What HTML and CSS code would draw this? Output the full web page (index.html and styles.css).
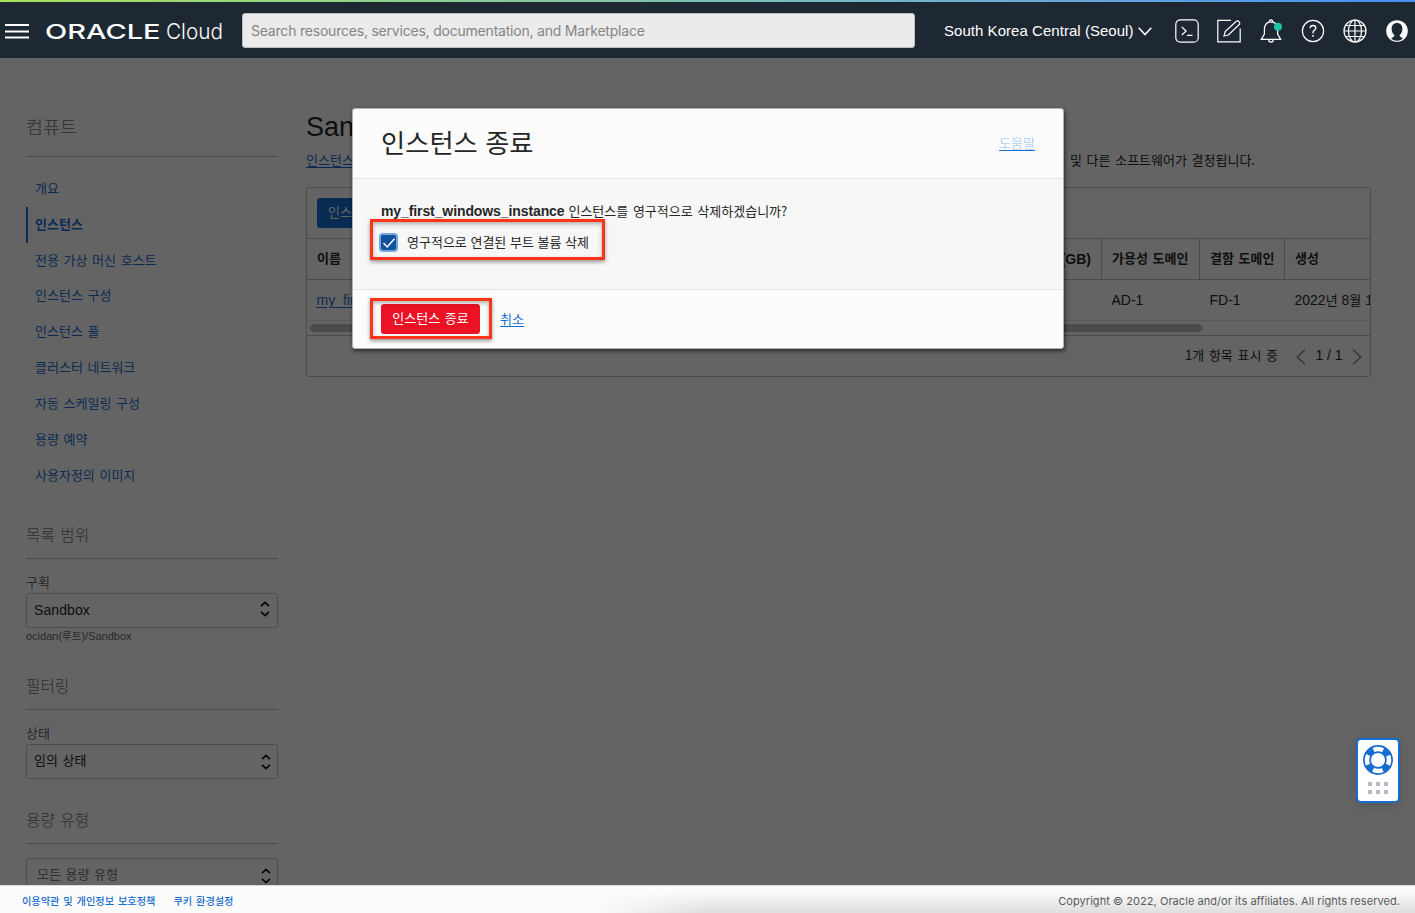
FILE: index.html
```html
<!DOCTYPE html>
<html lang="ko">
<head>
<meta charset="utf-8">
<title>Oracle Cloud</title>
<link rel="stylesheet" href="styles.css">
</head>
<body>
<header class="topbar">
  <svg class="menu" width="24" height="16" viewBox="0 0 24 16"><path d="M0 2h24M0 8.5h24M0 14.5h24" stroke="#fff" stroke-width="2"/></svg>
  <svg class="logo" width="180" height="26" viewBox="0 0 180 26" fill="#fff">
    <text class="logo-oracle" x="0" y="20.500" textLength="115.500" lengthAdjust="spacingAndGlyphs">ORACLE</text>
    <text class="logo-cloud" x="121" y="20.500" textLength="57" lengthAdjust="spacingAndGlyphs">Cloud</text>
  </svg>
  <div class="search"><span class="search-text">Search resources, services, documentation, and Marketplace</span></div>
  <div class="region"><span>South Korea Central (Seoul)</span>
    <svg width="14" height="9" viewBox="0 0 14 9" fill="none" stroke="#fff" stroke-width="1.5"><path d="M.7.8 7 7.6 13.3.8"/></svg>
  </div>
  <div class="tools">
    <svg width="24" height="24" viewBox="0 0 24 24" fill="none" stroke="#fff" stroke-width="1.2"><rect x=".8" y=".8" width="22.4" height="22.4" rx="4.5"/><path d="m6.8 8 4.3 4-4.3 4M12 16.4h5.5"/></svg>
    <svg width="24" height="24" viewBox="0 0 24 24" fill="none" stroke="#fff" stroke-width="1.2"><path d="M14 1.4H.8v21.4h22.4V9.500M7 17l1.200-4.400L19.300 2.300q1.500-.9 2.700.3t.6 2.600L11.400 16 7 17Z"/></svg>
    <svg width="24" height="24" viewBox="0 0 24 24" fill="none" stroke="#fff" stroke-width="1.2"><path d="M2.300 20.400 5.400 15V9.600Q5.900 4.200 10.200 3.200h3.600q4.300 1 4.800 6.400V15l3.100 5.400ZM10.200 3.200q0-2.400 1.800-2.400t1.800 2.400M9.700 20.500q0 2.700 2.300 2.700t2.300-2.700"/><circle cx="19" cy="7.800" r="4" fill="#18c9a8" stroke="none"/></svg>
    <svg width="24" height="24" viewBox="0 0 24 24" fill="none" stroke="#fff" stroke-width="1.2"><circle cx="12" cy="12" r="10.6"/><path d="M9.100 9.300q.1-2.800 2.900-2.800t2.800 2.600q0 1.300-1.500 2.300T12 13.600v1" stroke-width="1.300"/><path d="M12 16.100v1.700" stroke-width="1.500"/></svg>
    <svg width="24" height="24" viewBox="0 0 24 24" fill="none" stroke="#fff" stroke-width="1.2"><circle cx="12" cy="12" r="11"/><ellipse cx="12" cy="12" rx="6.500" ry="11"/><path d="M12 1v22M1 12h22M3 6.500h18M3 17.500h18"/></svg>
    <svg width="24" height="24" viewBox="0 0 24 24"><circle cx="12" cy="12" r="10.8" fill="#fff"/><path d="M12 4c-3.400 0-5.400 2.300-5.400 5.700 0 2.900 1.100 5.200 2.700 6.400v1.200L6 19.600q2.600 2.200 6 2.200t6-2.200l-3.300-2.300v-1.200c1.600-1.200 2.700-3.500 2.700-6.400C17.400 6.300 15.400 4 12 4Z" fill="#1e2833"/></svg>
  </div>
</header>

<main class="page">
  <aside class="side">
    <h2 class="side-title">컴퓨트</h2>
    <nav class="nav">
      <a>개요</a>
      <a class="active">인스턴스</a>
      <a>전용 가상 머신 호스트</a>
      <a>인스턴스 구성</a>
      <a>인스턴스 풀</a>
      <a>클러스터 네트워크</a>
      <a>자동 스케일링 구성</a>
      <a>용량 예약</a>
      <a>사용자정의 이미지</a>
    </nav>
    <section class="group scope">
      <h3 class="group-title">목록 범위</h3>
      <label class="label">구획</label>
      <div class="select latin"><span>Sandbox</span><svg width="10" height="16" viewBox="0 0 10 16"><path d="m1 5.200 4-3.700 4 3.700M1 10.800l4 3.700 4-3.700"/></svg></div>
      <div class="hint">ocidan(<span class="hint-ko">루트</span>)/Sandbox</div>
    </section>
    <section class="group filter">
      <h3 class="group-title">필터링</h3>
      <label class="label">상태</label>
      <div class="select low"><span>임의 상태</span><svg width="10" height="16" viewBox="0 0 10 16"><path d="m1 5.200 4-3.700 4 3.700M1 10.800l4 3.700 4-3.700"/></svg></div>
    </section>
    <section class="group capacity">
      <h3 class="group-title">용량 유형</h3>
      <div class="select low muted"><span>모든 용량 유형</span><svg width="10" height="16" viewBox="0 0 10 16"><path d="m1 5.200 4-3.700 4 3.700M1 10.800l4 3.700 4-3.700"/></svg></div>
    </section>
  </aside>

  <section class="content">
    <h1 class="heading">San</h1>
    <div class="intro"><a class="link">인스턴스</a><span>지 및 다른 소프트웨어가 결정됩니다.</span></div>
    <div class="table">
      <div class="toolbar"><span class="create">인스</span></div>
      <div class="row head">
        <div class="cell first"><span>이름</span><span class="gb">(GB)</span></div>
        <div class="cell">가용성 도메인</div>
        <div class="cell">결함 도메인</div>
        <div class="cell">생성</div>
      </div>
      <div class="row data">
        <div class="cell"><a class="link">my_first</a></div>
        <div class="cell">AD-1</div>
        <div class="cell">FD-1</div>
        <div class="cell date">2022<span class="ko">년</span> 8<span class="ko">월</span> 1</div>
      </div>
      <div class="scroll"><div class="thumb"></div></div>
      <div class="pager">
        <span class="count">1개 항목 표시 중</span>
        <svg width="10" height="16" viewBox="0 0 10 16"><path d="M9 .8 1.200 8 9 15.200"/></svg>
        <span class="num">1 / 1</span>
        <svg width="10" height="16" viewBox="0 0 10 16"><path d="M1 .8 8.800 8 1 15.200"/></svg>
      </div>
    </div>
  </section>

  <div class="overlay"></div>

  <div class="modal">
    <div class="modal-head"><h2 class="modal-title">인스턴스 종료</h2><a class="help-link">도움말</a></div>
    <div class="modal-body">
      <p class="question"><b>my_first_windows_instance</b><span>인스턴스를 영구적으로 삭제하겠습니까?</span></p>
      <div class="check-row">
        <span class="checkbox"><svg width="14" height="12" viewBox="0 0 14 12"><path d="m1.500 6 3.700 4L12.500 1.800" fill="none" stroke="#fff" stroke-width="1.500"/></svg></span>
        <span class="check-text">영구적으로 연결된 부트 볼륨 삭제</span>
      </div>
    </div>
    <div class="modal-foot"><span class="danger">인스턴스 종료</span><a class="cancel">취소</a></div>
    <div class="mark mark-check"></div>
    <div class="mark mark-button"></div>
  </div>

  <div class="support">
    <svg width="30" height="30" viewBox="0 0 30 30" fill="none"><circle cx="15" cy="15" r="11" stroke="#176ccf" stroke-width="8"/><circle cx="15" cy="15" r="11" stroke="#fff" stroke-width="4.500" stroke-dasharray="9.900 7.379" stroke-dashoffset="4.950"/></svg>
    <div class="dots"><i></i><i></i><i></i><i></i><i></i><i></i></div>
  </div>
</main>

<footer class="footer">
  <div class="legal"><a>이용약관 및 개인정보 보호정책</a><a>쿠키 환경설정</a></div>
  <span class="copy">Copyright © 2022, Oracle and/or its affiliates. All rights reserved.</span>
</footer>
</body>
</html>
```
FILE: styles.css
```css
* { box-sizing: border-box; }
body {
  margin: 0;
  width: 1415px;
  height: 913px;
  overflow: hidden;
  display: flex;
  flex-direction: column;
  font: 13px/20px "Noto Sans CJK KR", sans-serif;
  word-spacing: 1px;
  color: #262626;
  white-space: nowrap;
}
h1, h2, h3, p { margin: 0; font-weight: 400; }
svg { display: block; flex: none; }

.topbar {
  position: relative;
  height: 58px;
  flex: none;
  padding: 3px 6px 0 5px;
  display: flex;
  align-items: center;
  background: linear-gradient(90deg, #a6e45c, #74b9c5 60%, #4b8df8) 0 0 / 100% 2px no-repeat #1e2833;
  color: #fff;
}
.logo { margin-left: 16px; }
.logo-oracle { font: 500 20.500px Inter, sans-serif; word-spacing: 0; }
.logo-cloud { font: 300 22px Inter, sans-serif; }
.search {
  width: 673px;
  height: 35px;
  margin-left: 17px;
  padding-left: 8px;
  display: flex;
  align-items: center;
  background: #ebebeb;
  border: 1px solid #b6bfc6;
  border-radius: 3px;
}
.search-text { font: 14px/20px Inter, sans-serif; letter-spacing: -.21px; color: #858585; word-spacing: 0; }
.region {
  margin-left: 29px;
  padding-top: 1px;
  display: flex;
  align-items: center;
  gap: 4px;
  font: 15px/20px "Liberation Sans", sans-serif;
  letter-spacing: .04px;
  word-spacing: 0;
}
.tools { margin-left: auto; display: flex; gap: 18px; }

.page {
  position: relative;
  height: 827px;
  flex: none;
  overflow: hidden;
  display: flex;
  background: #fcfbfa;
}
.side { width: 252px; margin-left: 26px; flex: none; }
.side-title {
  height: 99px;
  padding-top: 55px;
  border-bottom: 1px solid #b9bcc0;
  font-size: 18.500px;
  line-height: 26px;
  font-weight: 300;
  color: #74706c;
}
.nav { padding-top: 14px; }
.nav a { display: flex; align-items: center; height: 35.850px; padding: 0 0 2px 9px; color: #176ccf; }
.nav .active { padding: 0 0 1px 7px; border-left: 2px solid #176ccf; font-weight: 700; }
.group-title {
  height: 36px;
  border-bottom: 1px solid #b9bcc0;
  font-size: 15.700px;
  line-height: 24px;
  font-weight: 300;
  color: #74706c;
}
.scope { padding-top: 29.350px; }
.filter { padding-top: 30px; }
.capacity { padding-top: 29px; }
.label { display: block; height: 34px; padding-top: 13px; color: #66625e; }
.select {
  height: 35px;
  padding: 0 6px 0 7px;
  display: flex;
  align-items: center;
  justify-content: space-between;
  border: 1px solid #b9bcc0;
  border-radius: 3px;
}
.select svg { fill: none; stroke: #111; stroke-width: 1.700; }
.latin { font: 14px/20px "Liberation Sans", sans-serif; letter-spacing: .1px; padding-right: 7px; }
.latin svg { margin-bottom: 2px; }
.low span { padding-bottom: 3px; }
.low svg { margin-top: 2px; }
.muted { margin-top: 14px; padding-left: 10px; color: #74706c; }
.hint { height: 16px; font: 11px/17px "Liberation Sans", sans-serif; color: #66625e; }
.hint-ko { font: 10.500px/15px "Noto Sans CJK KR", sans-serif; }

.content { width: 1065px; margin-left: 28px; padding-top: 53px; flex: none; }
.heading { height: 37px; font: 27px/32px "Liberation Sans", sans-serif; }
.intro { width: 949px; height: 39px; padding-top: 2px; display: flex; justify-content: space-between; }
.link { color: #176ccf; text-decoration: underline; text-underline-offset: 2px; }
.table { height: 190px; border: 1px solid #b9bcc0; border-radius: 3px; overflow: hidden; }
.toolbar { height: 51px; padding: 10px; border-bottom: 1px solid #b9bcc0; }
.create { display: block; width: 100px; height: 30px; padding: 4px 11px; border-radius: 3px; background: #166bcd; color: #fff; }
.row { display: grid; grid-template-columns: 795px 98px 85px 1fr; height: 41px; border-bottom: 1px solid #b9bcc0; }
.cell { padding: 9px 10px; overflow: hidden; }
.head { font-weight: 700; }
.head .cell { border-right: 1px solid #b9bcc0; }
.head .cell:last-child { border-right: 0; }
.first { display: flex; justify-content: space-between; }
.gb { font: 700 14px/22px "Liberation Sans", sans-serif; }
.data { border-color: #dedede; font: 14px/22px "Liberation Sans", sans-serif; word-spacing: 0; }
.data .cell { padding-left: 9.500px; }
.date { padding-right: 0; }
.ko { font: 13px/20px "Noto Sans CJK KR", sans-serif; }
.scroll { height: 15px; padding: 3px; border-bottom: 1px solid #b9bcc0; }
.thumb { width: 892px; height: 8px; border-radius: 4px; background: #bbb; }
.pager { height: 40px; padding: 0 8px 2px; display: flex; align-items: center; justify-content: flex-end; }
.pager svg { margin-top: 3px; fill: none; stroke: #858585; stroke-width: 1.500; }
.count { margin-right: 18px; padding-bottom: 1px; }
.num { width: 46px; text-align: center; font: 14px/20px "Liberation Sans", sans-serif; word-spacing: 0; }

.overlay { position: absolute; inset: 0; background: rgba(0, 0, 0, .6); }

.modal {
  position: absolute;
  left: 352px;
  top: 50px;
  width: 712px;
  height: 241px;
  border: 1px solid #a9b4bb;
  border-radius: 3px;
  background: #fcfcfc;
  box-shadow: 1px 2px 4px rgba(0, 0, 0, .6);
}
.modal-head { height: 70px; padding: 0 28px; display: flex; align-items: center; justify-content: space-between; border-bottom: 1px solid #e2e4e5; }
.modal-title { padding-bottom: 4px; font-size: 26.300px; line-height: 36px; word-spacing: 0; }
.help-link { padding-bottom: 1px; font-weight: 300; color: #8abcef; text-decoration: underline #176ccf; text-underline-offset: 2px; }
.modal-body { height: 111px; padding: 22px 28px; background: #f7f7f7; border-bottom: 1px solid #e2e4e5; }
.question { display: flex; gap: 4px; }
.question b { font: 700 14px/21px "Liberation Sans", sans-serif; letter-spacing: -.1px; }
.check-row { margin: 10px 0 0 -2px; display: flex; align-items: center; gap: 9px; }
.check-text { padding-bottom: 1px; word-spacing: 0; }
.checkbox { width: 19px; height: 19px; display: grid; place-items: center; background: #11529c; border: 2px solid #74a5df; border-radius: 4px; }
.modal-foot { height: 58px; padding: 0 28px; display: flex; align-items: center; gap: 20px; }
.danger { width: 99px; height: 30px; padding-top: 4px; border-radius: 3px; background: #eb1226; color: #fff; text-align: center; }
.cancel { padding-bottom: 1px; color: #176ccf; text-decoration: underline; text-underline-offset: 2px; }
.mark { position: absolute; left: 17px; height: 41px; border: 3px solid #fc3519; box-shadow: 0 2px 4px rgba(0, 0, 0, .4), inset 0 2px 4px rgba(0, 0, 0, .3); }
.mark-check { top: 110px; width: 235px; }
.mark-button { top: 189px; width: 122px; }

.support {
  position: absolute;
  right: 15px;
  top: 680px;
  width: 44px;
  height: 65px;
  padding-top: 5px;
  display: flex;
  flex-direction: column;
  align-items: center;
  gap: 7px;
  background: #fff;
  border: 2px solid #176ccf;
  border-radius: 5px;
  box-shadow: 0 2px 8px rgba(0, 0, 0, .15);
}
.dots { display: grid; grid-template-columns: repeat(3, 4px); gap: 4px; }
.dots i { height: 4px; background: #b7bbc5; }

.footer {
  height: 28px;
  padding: 0 15px 0 22px;
  display: flex;
  align-items: center;
  justify-content: space-between;
  border-top: 1px solid #d8d8e0;
  background: linear-gradient(100deg, #fcfcfc 42%, rgba(252, 252, 252, 0) 50%), linear-gradient(180deg, #fbfbfb 20%, #dedede);
}
.legal { display: flex; gap: 18px; font-size: 10.200px; font-weight: 500; color: #176ccf; padding-top: 2px; }
.copy { padding-top: 3px; font: 11px/16px Inter, sans-serif; letter-spacing: .055px; word-spacing: 0; color: #5a5a5a; }
```
